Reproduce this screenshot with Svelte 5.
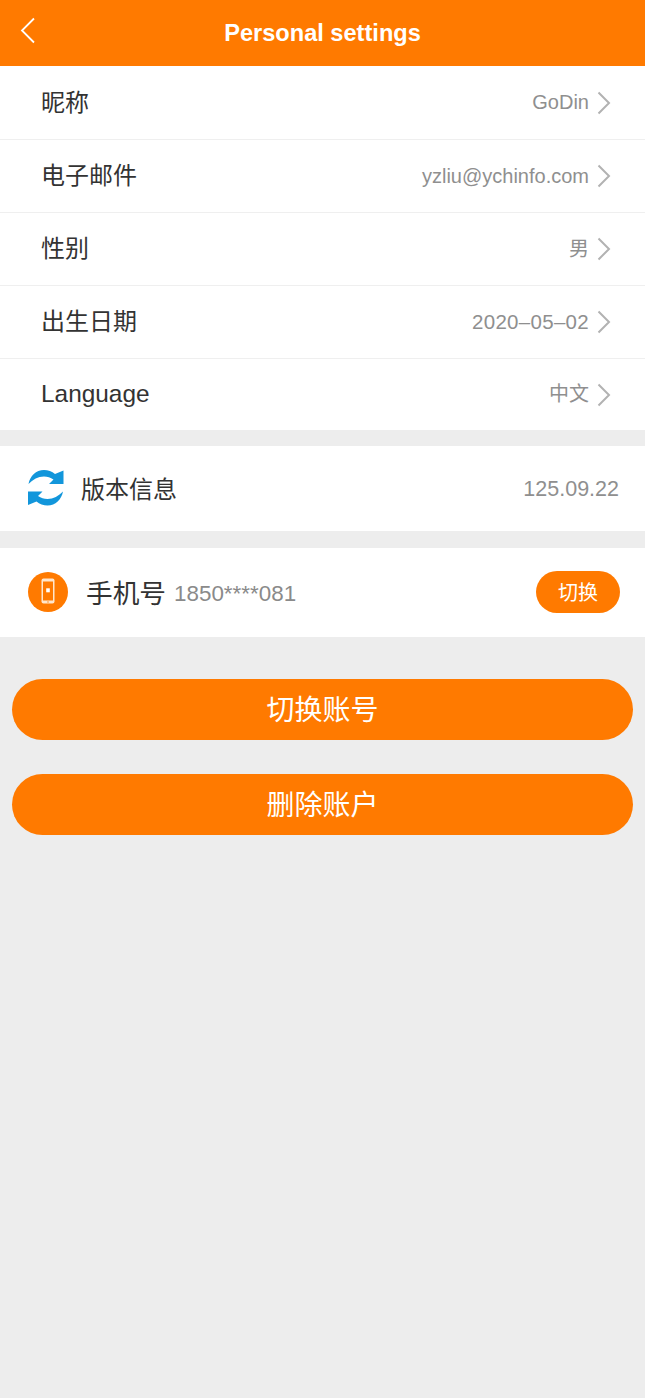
<script>
  const rows = [
    { label: '昵称', value: 'GoDin', labelCjk: true },
    { label: '电子邮件', value: 'yzliu@ychinfo.com', labelCjk: true },
    { label: '性别', value: '男', labelCjk: true, valueCjk: true },
    { label: '出生日期', value: '2020–05–02', labelCjk: true, wide: true },
    { label: 'Language', value: '中文', valueCjk: true, latinLabel: true }
  ];
  const syncArc = 'M.5 14C2 6 8 0 16 0c4 0 8 1.500 11 4L35.500.5V14H21l4.500-4.500C22.500 7.500 19.500 6.500 16 6.500 10 6.500 5 9.500.5 14Z';
</script>

<div class="page">
  <header class="bar">
    <svg class="back" width="17" height="27" viewBox="0 0 17 27" fill="none" aria-hidden="true">
      <path d="M15 1.5 3 13.5 15 25.5" stroke="#fff" stroke-width="1.8" />
    </svg>
    <h1>Personal settings</h1>
  </header>

  <section class="list">
    {#each rows as row}
      <div class="row">
        <span class="label" class:cjk={row.labelCjk} class:latin={row.latinLabel}>{row.label}</span>
        <span class="value" class:cjk={row.valueCjk} class:wide={row.wide}>{row.value}</span>
        <svg class="chev" width="14" height="24" viewBox="0 0 14 24" fill="none" aria-hidden="true">
          <path d="M1.5 1.5 12 12 1.5 22.5" stroke="#b2b2b2" stroke-width="2" />
        </svg>
      </div>
    {/each}
  </section>

  <section class="version">
    <svg class="sync" width="36" height="36" viewBox="0 0 36 36" aria-hidden="true">
      <path fill="#1296db" d={syncArc} />
      <path fill="#1296db" transform="rotate(180 17.750 17.750)" d={syncArc} />
    </svg>
    <span class="version-label cjk">版本信息</span>
    <span class="version-num">125.09.22</span>
  </section>

  <section class="phone">
    <svg class="handset" width="40" height="40" viewBox="0 0 40 40" aria-hidden="true">
      <circle cx="20" cy="20" r="20" fill="#ff7a00" />
      <rect x="13.500" y="6.500" width="13" height="25" rx="2" fill="#ffe6cc" />
      <rect x="15" y="9.500" width="10" height="19" fill="#ff7a00" />
      <rect x="18.200" y="16.300" width="3.600" height="4" fill="#fff" />
      <circle cx="20" cy="30" r=".7" fill="#ff7a00" />
    </svg>
    <span class="phone-label cjk">手机号</span>
    <span class="phone-num">1850****081</span>
    <span class="switch cjk">切换</span>
  </section>

  <div class="actions">
    <button class="cjk">切换账号</button>
    <button class="cjk">删除账户</button>
  </div>
</div>

<style>
  :global(body) {
    margin: 0;
    background: #ededed;
  }

  .page {
    min-height: 1398px;
    background: #ededed;
    font-family: "Liberation Sans", "Noto Sans CJK SC", sans-serif;
    color: #333;
  }

  .cjk {
    font-family: "Noto Sans CJK SC", sans-serif;
  }

  .bar {
    height: 66px;
    background: #ff7a00;
    display: flex;
    align-items: center;
    justify-content: center;
    position: relative;
  }

  .back {
    position: absolute;
    left: 19px;
    top: 17px;
  }

  h1 {
    margin: 0;
    color: #fff;
    font-size: 23.600px;
    font-weight: 700;
  }

  .list {
    background: #fff;
  }

  .row {
    height: 72px;
    display: flex;
    align-items: center;
    padding: 0 34px 0 41px;
    border-bottom: 1px solid #efefef;
  }

  .row:first-child {
    height: 73px;
  }

  .row:last-child {
    height: 71px;
    border-bottom: 0;
  }

  .label {
    font-size: 24px;
    line-height: 32px;
    margin-right: auto;
    margin-bottom: 4px;
  }

  .latin {
    font-size: 24.400px;
    margin-bottom: 2px;
  }

  .value {
    font-size: 20px;
    line-height: 28px;
    color: #8f8f8f;
    margin-right: 8px;
    margin-bottom: 1px;
  }

  .value.cjk {
    margin-bottom: 3px;
  }

  .wide {
    letter-spacing: .3px;
    font-size: 20.500px;
  }

  .version {
    margin-top: 16px;
    height: 85px;
    background: #fff;
    display: flex;
    align-items: center;
    padding: 0 26px 0 28px;
  }

  .sync {
    margin-bottom: 2px;
  }

  .version-label {
    font-size: 24px;
    line-height: 32px;
    margin-left: 17px;
    margin-right: auto;
    margin-bottom: 2px;
  }

  .version-num {
    font-size: 21.500px;
    color: #8f8f8f;
    margin-top: 2px;
  }

  .phone {
    margin-top: 17px;
    height: 89px;
    background: #fff;
    display: flex;
    align-items: center;
    padding: 0 25px 0 28px;
  }

  .handset {
    margin-bottom: 1px;
  }

  .phone-label {
    font-size: 26.700px;
    line-height: 34px;
    margin-left: 18px;
    margin-bottom: 2px;
  }

  .phone-num {
    font-size: 22.400px;
    color: #8a8a8a;
    margin-left: 8px;
    margin-right: auto;
    margin-top: 3px;
  }

  .switch {
    width: 84px;
    height: 42px;
    margin-bottom: 1px;
    border-radius: 21px;
    background: #ff7a00;
    color: #fff;
    font-size: 20px;
    line-height: 28px;
    display: flex;
    align-items: center;
    justify-content: center;
  }

  .actions {
    padding: 42px 12px 0;
    display: flex;
    flex-direction: column;
    gap: 34px;
  }

  button {
    height: 61px;
    border: 0;
    padding: 0 0 4px;
    border-radius: 30.500px;
    background: #ff7a00;
    color: #fff;
    font-size: 28px;
  }
</style>
